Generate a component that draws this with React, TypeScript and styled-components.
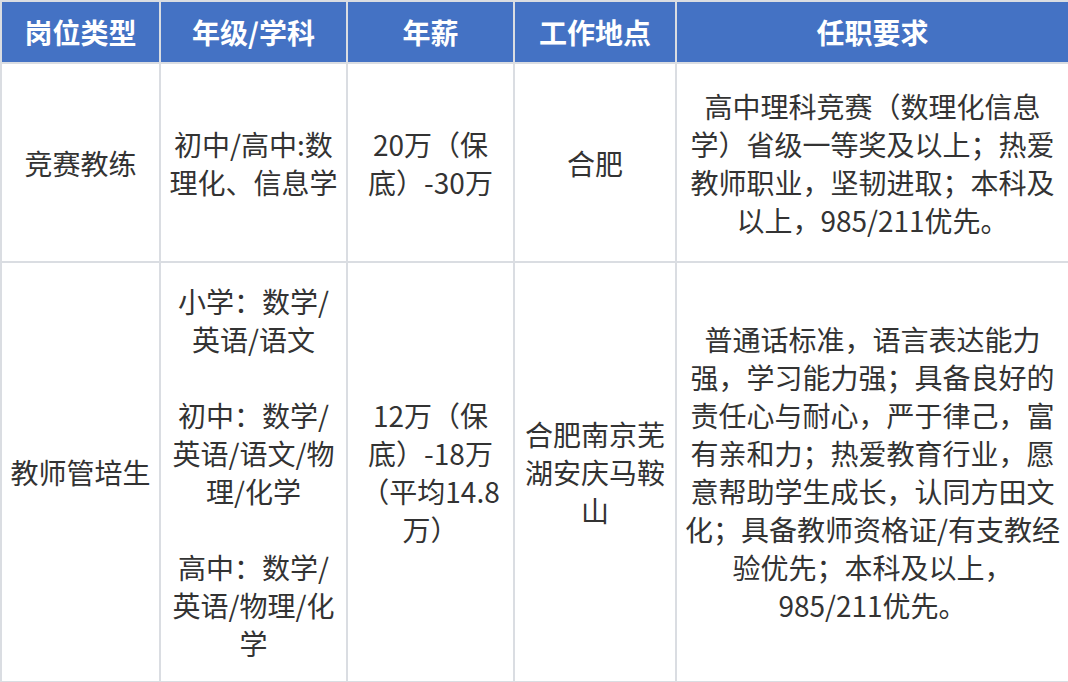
import React from "react";
import styled, { createGlobalStyle } from "styled-components";

const GlobalStyle = createGlobalStyle`
  html, body {
    margin: 0;
    padding: 0;
    background: #ffffff;
  }
  body {
    font-family: "Noto Sans CJK SC", "Noto Sans", sans-serif;
    color: #333333;
  }
`;

const Table = styled.table`
  width: 1068px;
  border-collapse: collapse;
  table-layout: fixed;
  font-size: 28px;
  line-height: 38px;
`;

const HeadCell = styled.th`
  height: 60px;
  padding: 0;
  background: #4472c4;
  color: #ffffff;
  font-weight: 700;
  text-align: center;
  vertical-align: middle;
  border: 2px solid #dadde2;
  & + & {
    border-left-color: #d4d9e2;
  }
`;

const Cell = styled.td<{ $pad: number; $h: number }>`
  height: ${(p) => p.$h}px;
  padding: 0 ${(p) => p.$pad}px;
  text-align: center;
  vertical-align: middle;
  border: 2px solid #dadde2;
  font-weight: 400;
`;

const Para = styled.div`
  & + & {
    margin-top: 38px;
  }
`;

const cols = [
  { title: "岗位类型", width: 159, pad: 2 },
  { title: "年级/学科", width: 187, pad: 3.5 },
  { title: "年薪", width: 167, pad: 13 },
  { title: "工作地点", width: 162, pad: 2.5 },
  { title: "任职要求", width: 393, pad: 7.5 },
];

const rows: { h: number; cells: string[][] }[] = [
  {
    h: 197,
    cells: [
      ["竞赛教练"],
      ["初中/高中:数理化、信息学"],
      ["20万（保底）-30万"],
      ["合肥"],
      ["高中理科竞赛（数理化信息学）省级一等奖及以上；热爱教师职业，坚韧进取；本科及以上，985/211优先。"],
    ],
  },
  {
    h: 418,
    cells: [
      ["教师管培生"],
      ["小学：数学/英语/语文", "初中：数学/英语/语文/物理/化学", "高中：数学/英语/物理/化学"],
      ["12万（保底）-18万（平均14.8万）"],
      ["合肥南京芜湖安庆马鞍山"],
      [
        "普通话标准，语言表达能力强，学习能力强；具备良好的责任心与耐心，严于律己，富有亲和力；热爱教育行业，愿意帮助学生成长，认同方田文化；具备教师资格证/有支教经验优先；本科及以上，985/211优先。",
      ],
    ],
  },
];

export default function App() {
  return (
    <>
      <GlobalStyle />
      <Table>
        <colgroup>
          {cols.map((c) => (
            <col key={c.title} style={{ width: c.width }} />
          ))}
        </colgroup>
        <thead>
          <tr>
            {cols.map((c) => (
              <HeadCell key={c.title}>{c.title}</HeadCell>
            ))}
          </tr>
        </thead>
        <tbody>
          {rows.map((r, i) => (
            <tr key={i}>
              {r.cells.map((paras, j) => (
                <Cell key={j} $pad={cols[j].pad} $h={r.h}>
                  {paras.map((t, k) => (
                    <Para key={k}>{t}</Para>
                  ))}
                </Cell>
              ))}
            </tr>
          ))}
        </tbody>
      </Table>
    </>
  );
}
